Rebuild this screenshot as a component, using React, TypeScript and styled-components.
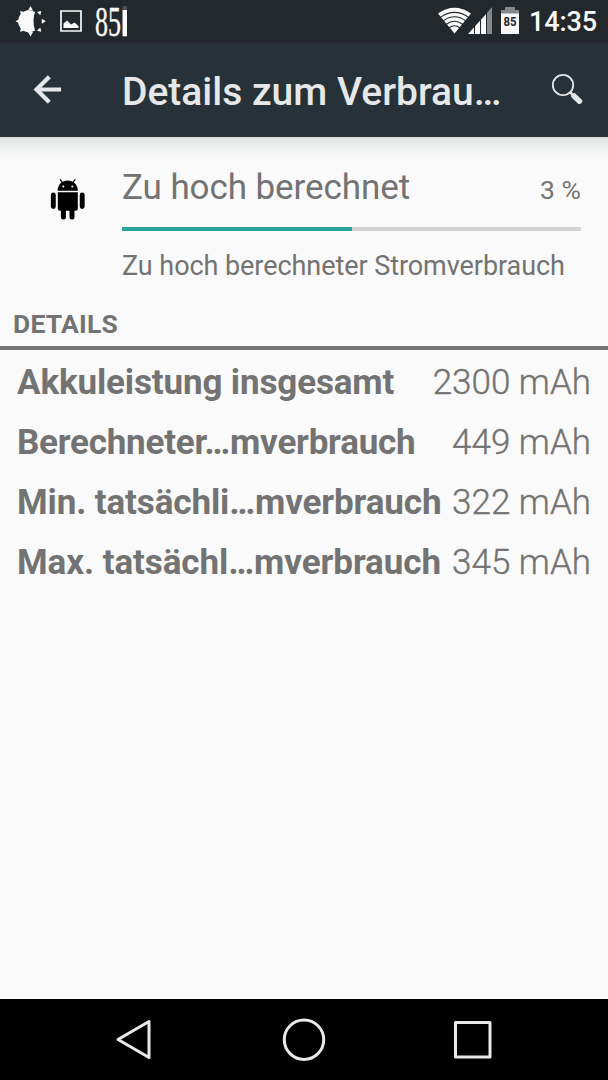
import React from "react";
import styled, { createGlobalStyle } from "styled-components";

const Global = createGlobalStyle`
  * { box-sizing: border-box; }
  body { margin: 0; background: #fafafa; font-family: Roboto, sans-serif; color: #737373; }
  svg { display: block; flex: none; overflow: visible; }
`;

const Screen = styled.div`
  width: 608px;
  height: 1080px;
  display: flex;
  flex-direction: column;
  overflow: hidden;
  background: #fafafa;
`;

const StatusBar = styled.header`
  height: 42px;
  flex: none;
  display: flex;
  justify-content: space-between;
  background: #22282b;
  color: #fafafa;
`;

const StatusGroup = styled.div`
  display: flex;
  align-items: flex-start;
`;

const BatteryPercent = styled.svg`
  margin-left: 12px;
  font-family: "Liberation Serif", serif;
`;

const Clock = styled.span`
  margin-left: 9px;
  width: 79px;
  font-size: 27px;
  font-weight: 500;
  line-height: 44px;
  letter-spacing: -0.1px;
`;

const AppBar = styled.nav`
  height: 94.5px;
  flex: none;
  display: flex;
  align-items: flex-start;
  background: #273238;
  color: #e6e7e8;
  border-top: 1px solid #252d32;
`;

const Title = styled.h1`
  margin: 0;
  width: 410px;
  font-size: 39px;
  font-weight: 500;
  line-height: 99px;
  white-space: nowrap;
`;

const Content = styled.main`
  flex: 1;
  background: linear-gradient(#dcdede 0, #e8e9e9 6px, #f2f3f3 14px, #fafafa 24px);
`;

const Summary = styled.section`
  display: flex;
  padding: 30.5px 27px 0 50px;
  height: 168px;
`;

const SummaryBody = styled.div`
  width: 459px;
  margin-left: 37px;
`;

const SummaryHead = styled.div`
  display: flex;
  justify-content: space-between;
  align-items: baseline;
  height: 59.5px;
`;

const Name = styled.span`
  font-size: 35px;
  line-height: 42px;
  letter-spacing: -0.08px;
  white-space: nowrap;
`;

const Percent = styled.span`
  font-size: 26.5px;
`;

const Track = styled.div`
  height: 4px;
  background: #d0d3d2;
`;

const Fill = styled.div`
  height: 100%;
  background: #26a69a;
`;

const Description = styled.p`
  margin: 17px 0 0;
  font-size: 27px;
  line-height: 36px;
  letter-spacing: -0.06px;
  white-space: nowrap;
`;

const SectionTitle = styled.h2`
  margin: 0;
  height: 45.5px;
  padding: 0 0 0 13px;
  font-size: 26.5px;
  font-weight: 700;
  line-height: 38px;
  letter-spacing: 0.2px;
  border-bottom: 4px solid #737573;
`;

const Table = styled.section`
  padding-top: 3px;
`;

const Row = styled.div`
  height: 60px;
  padding: 0 17px;
  display: flex;
  justify-content: space-between;
  font-size: 35px;
  line-height: 60px;
  white-space: nowrap;
`;

const Label = styled.span<{ $spacing: number }>`
  font-weight: 700;
  letter-spacing: ${(p) => p.$spacing}px;
`;

const Value = styled.span`
  font-weight: 300;
  -webkit-text-stroke: 0.35px currentColor;
`;

const NavBar = styled.footer`
  height: 81px;
  flex: none;
  display: flex;
  align-items: center;
  justify-content: center;
  gap: 125px;
  background: #000;
`;

const rows = [
  { label: "Akkuleistung insgesamt", value: "2300 mAh", spacing: -0.14 },
  { label: "Berechneter…mverbrauch", value: "449 mAh", spacing: -0.23 },
  { label: "Min. tatsächli…mverbrauch", value: "322 mAh", spacing: -0.12 },
  { label: "Max. tatsächl…mverbrauch", value: "345 mAh", spacing: -0.08 },
];

const BrightnessIcon = () => (
  <svg width="60" height="42" viewBox="0 0 60 42" fill="#fafafa">
    <path d="M35 12A11 11 0 1 0 35 30.500Q32 21.300 35 12Z" />
    <path d="M30.500 6l2.500 4.500h-5zM30.500 36.500l2.500-4.500h-5zM15.500 21.300l4.500-2.500v5zM20 11l4 1-3 3zM20 31.800l4-1-3-3zM41.300 11l-4.300 1 3.300 3.300zM41.300 31.800l-4.300-1 3.300-3.300zM45.800 21.300l-4-2.500v5z" />
  </svg>
);

const PictureIcon = () => (
  <svg width="22" height="42" viewBox="60 0 22 42">
    <path d="M61 11h20v20h-20z" fill="none" stroke="#fafafa" strokeWidth="1.700" />
    <path d="M63.500 28V23.500L67 20.500l4 4 3.500-2 4 3.500v2z" fill="#fafafa" />
  </svg>
);

const LevelIcon = () => (
  <svg width="6" height="42" viewBox="0 0 6 42">
    <path d="M.5 6h4.500v4h-4.500z" fill="#4b5053" />
    <path d="M.5 10h4.500v26.300h-4.500z" fill="#fafafa" />
  </svg>
);

const WifiIcon = () => (
  <svg width="33" height="42" viewBox="438 0 33 42">
    <path d="M438 13.500Q454.500 2 471 13.500L454.500 33.500Z" fill="#fafafa" />
    <g fill="none" stroke="#22282b" strokeWidth="1.100">
      <path d="M440 17.600Q454.500 7.200 469 17.600" />
      <path d="M443 21Q454.500 12.500 466 21" />
      <path d="M446 24.500Q454.500 18 463 24.500" />
      <path d="M449 28Q454.500 23.500 460 28" />
    </g>
  </svg>
);

const SignalIcon = () => (
  <svg width="29" height="42" viewBox="471 0 29 42">
    <path d="M468 34L487 13V34Z" fill="#fafafa" />
    <path d="M487 13L492 7V34h-5z" fill="#85898b" />
    <path d="M474.500 24v10M480.500 18v16M486.500 12v22" stroke="#22282b" strokeWidth="1" />
  </svg>
);

const BatteryIcon = () => (
  <svg width="20" height="42" viewBox="500 0 20 42">
    <path d="M505 7h10v3h4v5h-18v-5h4z" fill="#85898b" />
    <path d="M501 13.500h18V34h-18z" fill="#fafafa" />
    <text x="503.500" y="25.500" textLength="13" lengthAdjust="spacingAndGlyphs" fontSize="13" fontWeight="700" fontFamily="Roboto, sans-serif" fill="#22282b">
      85
    </text>
  </svg>
);

const BackIcon = () => (
  <svg width="122" height="93" viewBox="0 43 122 93" fill="none" stroke="#e6e7e8">
    <path d="M61 89.500H36M49.300 76.700L36.500 89.500l12.800 12.800" strokeWidth="4.200" />
  </svg>
);

const SearchIcon = () => (
  <svg width="70" height="93" viewBox="532 43 70 93" fill="none" stroke="#e6e7e8">
    <circle cx="563" cy="85" r="10.200" strokeWidth="1.800" />
    <path d="M570 92l3 3" strokeWidth="2.500" />
    <path d="M574 96l5.500 5.200" strokeWidth="5.500" strokeLinecap="round" />
  </svg>
);

const AndroidIcon = () => (
  <svg width="35" height="60" viewBox="50 167 35 60">
    <g stroke="#000" strokeLinecap="round" fill="none">
      <path d="M60.200 179.700l3 4M75 179.700l-3 4" strokeWidth="1.200" />
      <path d="M53.300 195v11.500M82.200 195v11.500" strokeWidth="4.900" />
      <path d="M63.400 208v9M72 208v9" strokeWidth="5" />
    </g>
    <path d="M57.500 190.700C58 184 62.500 180.500 67.700 180.500S77.500 184 78 190.700ZM57.800 192.300h20v16q0 2.500-2.500 2.500h-15q-2.500 0-2.500-2.500z" fill="#000" />
    <circle cx="63.300" cy="186.500" r="1" fill="#fafafa" />
    <circle cx="72.300" cy="186.500" r="1" fill="#fafafa" />
  </svg>
);

const NavIcon = ({ children }: { children: React.ReactNode }) => (
  <svg width="44" height="44" viewBox="0 0 44 44" fill="none" stroke="#e8e9ea" strokeWidth="3" strokeLinejoin="round">
    {children}
  </svg>
);

export default function App() {
  return (
    <Screen>
      <Global />
      <StatusBar>
        <StatusGroup>
          <BrightnessIcon />
          <PictureIcon />
          <BatteryPercent width="28" height="42" viewBox="0 0 28 42" fill="#fafafa" stroke="#fafafa" strokeWidth="0.4">
            <text x="1" y="35.500" fontSize="43" textLength="26" lengthAdjust="spacingAndGlyphs">85</text>
          </BatteryPercent>
          <LevelIcon />
        </StatusGroup>
        <StatusGroup>
          <WifiIcon />
          <SignalIcon />
          <BatteryIcon />
          <Clock>14:35</Clock>
        </StatusGroup>
      </StatusBar>
      <AppBar>
        <BackIcon />
        <Title>Details zum Verbrau…</Title>
        <SearchIcon />
      </AppBar>
      <Content>
        <Summary>
          <AndroidIcon />
          <SummaryBody>
            <SummaryHead>
              <Name>Zu hoch berechnet</Name>
              <Percent>3 %</Percent>
            </SummaryHead>
            <Track>
              <Fill style={{ width: "50%" }} />
            </Track>
            <Description>Zu hoch berechneter Stromverbrauch</Description>
          </SummaryBody>
        </Summary>
        <SectionTitle>DETAILS</SectionTitle>
        <Table>
          {rows.map((r) => (
            <Row key={r.label}>
              <Label $spacing={r.spacing}>{r.label}</Label>
              <Value>{r.value}</Value>
            </Row>
          ))}
        </Table>
      </Content>
      <NavBar>
        <NavIcon>
          <path d="M5 21.500L36 3.500V39.500Z" />
        </NavIcon>
        <NavIcon>
          <circle cx="22" cy="21.700" r="19.700" />
        </NavIcon>
        <NavIcon>
          <path d="M4.500 4.500h34.500v34.500H4.500z" />
        </NavIcon>
      </NavBar>
    </Screen>
  );
}
